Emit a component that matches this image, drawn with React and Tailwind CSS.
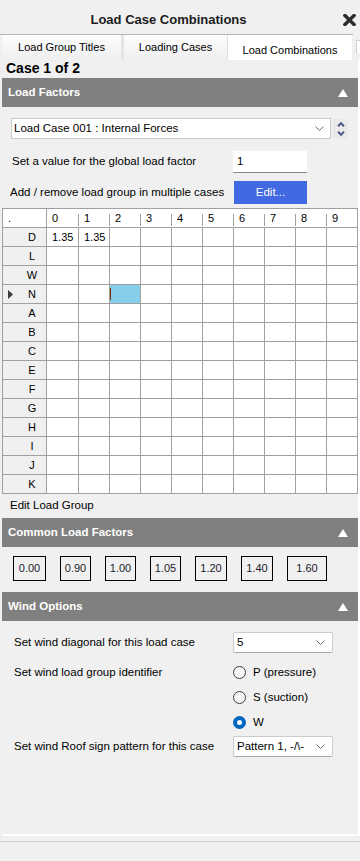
import React from 'react';

// Load case combinations side panel
const COLS = ['0', '1', '2', '3', '4', '5', '6', '7', '8', '9'];
const ROWS = ['D', 'L', 'W', 'N', 'A', 'B', 'C', 'E', 'F', 'G', 'H', 'I', 'J', 'K'];
const VALUES = { D: { 0: '1.35', 1: '1.35' } };

const FACTORS = [
    { label: '0.00', cls: 'w-[33px]' },
    { label: '0.90', cls: 'w-[31px]' },
    { label: '1.00', cls: 'w-[31px]' },
    { label: '1.05', cls: 'w-[31px]' },
    { label: '1.20', cls: 'w-[32px]' },
    { label: '1.40', cls: 'w-[32px]' },
    { label: '1.60', cls: 'w-[40px]' },
];

function Chevron() {
    return (
        <svg width="9" height="5" viewBox="0 0 9 5" className="shrink-0">
            <polyline points="0.5,0.5 4.5,4.5 8.5,0.5" fill="none" stroke="#6b6b6b" strokeWidth="1" />
        </svg>
    );
}

function SectionHeader({ title, className = '' }) {
    return (
        <div className={`h-[29px] bg-[#808080] flex items-center justify-between pl-[6px] pr-[10px] ${className}`}>
            <span className="text-white text-[11.5px] font-bold">{title}</span>
            <svg width="10" height="8" viewBox="0 0 10 8">
                <polygon points="5,0 10,8 0,8" fill="#ffffff" />
            </svg>
        </div>
    );
}

function Select({ value }) {
    return (
        <div className="w-[100px] h-[21px] bg-white border border-[#cccccc] border-b-[#a8a8a8] rounded-[2px] flex items-center justify-between pl-[3px] pr-[7px] text-[11.5px]">
            <span>{value}</span>
            <Chevron />
        </div>
    );
}

function Radio({ label, checked }) {
    return (
        <div className="h-[25px] flex items-center gap-[7px]">
            {checked ? (
                <span className="w-[13px] h-[13px] rounded-full bg-[#0067c0] flex items-center justify-center">
                    <span className="w-[5px] h-[5px] rounded-full bg-white" />
                </span>
            ) : (
                <span className="w-[13px] h-[13px] rounded-full border border-[#404040] bg-[#f6f6f6]" />
            )}
            <span className="text-[11.5px]">{label}</span>
        </div>
    );
}

function Grid() {
    return (
        <div className="mt-[4px] border border-[#a0a0a0] bg-white">
            {/* header row */}
            <div className="h-[18px] flex">
                <div className="w-[43px] pl-[5px] flex items-center">.</div>
                {COLS.map((c, i) => (
                    <div key={c} className={`flex ${i === 0 ? 'w-[32px] border-l border-[#a0a0a0]' : 'w-[31px]'}`}>
                        {i > 0 && <div className="w-px h-[12px] bg-[#a0a0a0] self-end mb-[1px]" />}
                        <span className="pl-[5px] flex items-center">{c}</span>
                    </div>
                ))}
            </div>
            {ROWS.map(r => (
                <div key={r} className="h-[19px] flex border-t border-[#a0a0a0]">
                    <div className="w-[43px] bg-[#f0f0f0] flex items-center">
                        <div className="w-[15px] flex justify-center">
                            {r === 'N' && (
                                <svg width="5" height="9" viewBox="0 0 5 9">
                                    <polygon points="0,0 5,4.5 0,9" fill="#3c3c3c" />
                                </svg>
                            )}
                        </div>
                        <span className="flex-1 text-center">{r}</span>
                    </div>
                    {COLS.map((c, i) => {
                        const active = r === 'N' && i === 2;
                        return (
                            <div
                                key={c}
                                className={`border-l border-[#a0a0a0] flex items-center ${i === 0 ? 'w-[32px]' : 'w-[31px]'} ${active ? 'bg-[#87ceeb]' : 'pl-[5px]'}`}
                            >
                                {active && <span className="w-px h-[12px] bg-[#7a2a10]" />}
                                {VALUES[r]?.[i]}
                            </div>
                        );
                    })}
                </div>
            ))}
        </div>
    );
}

export default function App() {
    return (
        <div className="w-[360px] h-[861px] bg-[#f0f0f0] text-black text-[11px] overflow-hidden" style={{ fontFamily: '"Liberation Sans", Arial, sans-serif' }}>
            {/* Title */}
            <div className="h-[34px] flex items-center pt-[6px]">
                <div className="w-[337px] text-center text-[13px] font-bold text-[#1c1c1c]">Load Case Combinations</div>
                <svg width="13" height="12" viewBox="0 0 13 12" className="ml-[6px]">
                    <path d="M2 1.5 L11 10.5 M11 1.5 L2 10.5" stroke="#2e2e2e" strokeWidth="3.4" strokeLinecap="square" />
                </svg>
            </div>

            {/* Tabs */}
            <div className="h-[25px] flex">
                <div className="w-[353px] flex border-t border-[#b5b5b5]">
                    <div className="ml-[2px] w-[119px] h-[24px] bg-gradient-to-b from-[#fdfdfd] to-[#efefef] flex items-center justify-center">Load Group Titles</div>
                    <div className="w-[3px] h-[24px] bg-[#e4e4e4]" />
                    <div className="w-[104px] h-[24px] bg-gradient-to-b from-[#fdfdfd] to-[#efefef] flex items-center justify-center border-r border-[#e0e0e0]">Loading Cases</div>
                    <div className="w-[124px] h-[25px] bg-white flex items-center justify-center pt-[5px] relative z-10">Load Combinations</div>
                </div>
                <div className="ml-[3px] mt-[6px] w-[4px] h-[13px] border-l border-t border-[#cfcfcf] bg-white" />
            </div>

            {/* Panel */}
            <div className="ml-[2px] w-[358px] h-[777px] border-r-2 border-b-2 border-white flex flex-col">
                <div className="h-[19px] flex items-center pl-[4px] text-[14px] font-bold">Case 1 of 2</div>

                <SectionHeader title="Load Factors" />

                <div className="mt-[11px] ml-[9px] flex items-start">
                    <div className="w-[320px] h-[21px] bg-white border border-[#c9c9c9] flex items-center justify-between pl-[2px] pr-[6px] text-[11.5px]">
                        <span>Load Case 001 : Internal Forces</span>
                        <Chevron />
                    </div>
                    <div className="ml-[2px] mt-[1px] w-[15px] h-[19px] bg-[#e9e9e9] flex flex-col items-center justify-center gap-[4px]">
                        <svg width="8" height="5" viewBox="0 0 8 5">
                            <polyline points="1,4.2 4,1.2 7,4.2" fill="none" stroke="#4b5a86" strokeWidth="2" />
                        </svg>
                        <svg width="8" height="5" viewBox="0 0 8 5">
                            <polyline points="1,0.8 4,3.8 7,0.8" fill="none" stroke="#4b5a86" strokeWidth="2" />
                        </svg>
                    </div>
                </div>

                <div className="mt-[12px] flex items-center h-[22px]">
                    <div className="w-[231px] pl-[10px] text-[11.5px]">Set a value for the global load factor</div>
                    <div className="w-[74px] h-[22px] bg-white border-b border-[#8a8a8a] flex items-center pl-[4px] text-[11.5px]">1</div>
                </div>

                <div className="mt-[8px] flex items-center h-[23px]">
                    <div className="w-[232px] pl-[8px] text-[11.5px]">Add / remove load group in multiple cases</div>
                    <div className="w-[73px] h-[23px] bg-[#4169e1] text-white flex items-center justify-center text-[11.5px]">Edit...</div>
                </div>

                <Grid />

                <div className="h-[24px] flex items-center pl-[8px] text-[11.5px]">Edit Load Group</div>

                <SectionHeader title="Common Load Factors" />

                <div className="mt-[9px] ml-[11px] flex gap-[14px]">
                    {FACTORS.map(f => (
                        <div key={f.label} className={`${f.cls} h-[25px] border border-black flex items-center justify-center text-[#1a1a2a]`}>
                            {f.label}
                        </div>
                    ))}
                </div>

                <SectionHeader title="Wind Options" className="mt-[11px]" />

                <div className="mt-[11px] flex items-center">
                    <div className="w-[231px] pl-[12px] text-[11.5px]">Set wind diagonal for this load case</div>
                    <Select value="5" />
                </div>

                <div className="mt-[7px] flex items-start">
                    <div className="w-[231px] pl-[12px] h-[26px] flex items-center text-[11.5px]">Set wind load group identifier</div>
                    <div className="flex flex-col">
                        <Radio label="P (pressure)" />
                        <Radio label="S (suction)" />
                        <Radio label="W" checked />
                    </div>
                </div>

                <div className="mt-[1px] flex items-center">
                    <div className="w-[231px] pl-[12px] text-[11.5px]">Set wind Roof sign pattern for this case</div>
                    <Select value="Pattern 1, -/\-" />
                </div>
            </div>

            <div className="mt-[5px] h-px bg-[#d2d2d2]" />
        </div>
    );
}
